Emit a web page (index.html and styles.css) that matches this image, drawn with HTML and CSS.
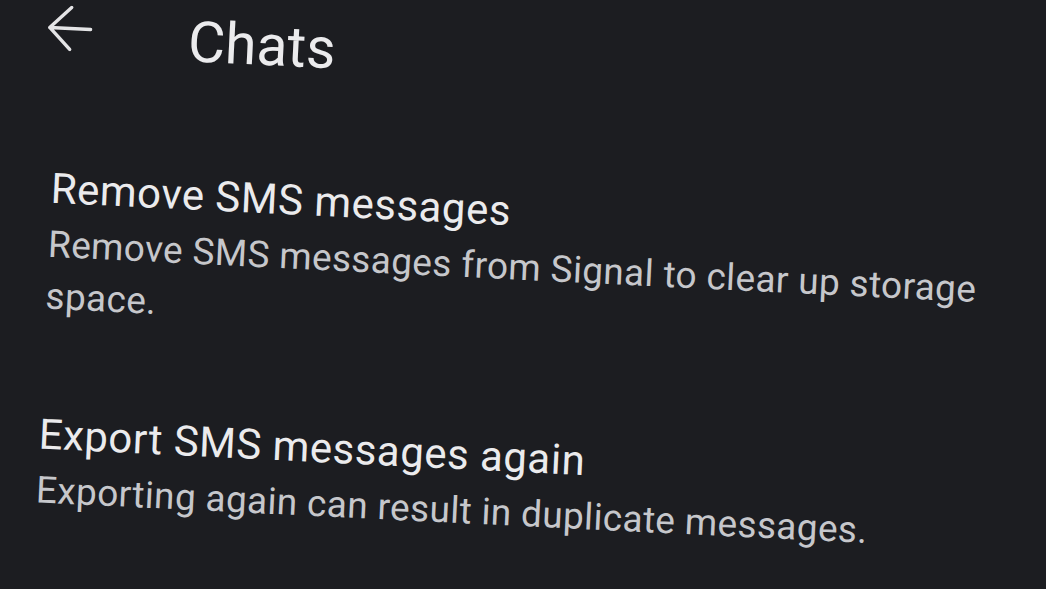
FILE: index.html
```html
<!DOCTYPE html>
<html lang="en">
<head>
<meta charset="utf-8">
<title>Chats</title>
<link rel="stylesheet" href="styles.css">
</head>
<body>
<div class="screen">
  <header class="appbar">
    <button class="back" aria-label="Back">
      <svg viewBox="0 0 46 46" width="46" height="46" aria-hidden="true">
        <path d="M44 23H3M24 2L3 23L24 44" fill="none" stroke="#e4e4e6" stroke-width="3.4" stroke-linecap="round" stroke-linejoin="round"/>
      </svg>
    </button>
    <h1 class="title">Chats</h1>
  </header>
  <ul class="prefs">
    <li class="pref">
      <div class="pref-title">Remove SMS messages</div>
      <div class="pref-summary">Remove SMS messages from Signal to clear up storage space.</div>
    </li>
    <li class="pref">
      <div class="pref-title">Export SMS messages again</div>
      <div class="pref-summary">Exporting again can result in duplicate messages.</div>
    </li>
  </ul>
</div>
</body>
</html>
```
FILE: styles.css
```css
html, body {
  margin: 0;
  padding: 0;
  background: #1c1d21;
  overflow: hidden;
}
body {
  width: 1046px;
  height: 589px;
  font-family: Roboto, "Noto Sans", sans-serif;
  color: #e8e8ea;
}
.screen {
  width: 1010px;
  transform: rotate(2.8deg);
  transform-origin: 0 0;
}
.appbar {
  display: flex;
  align-items: flex-start;
  height: 66px;
  margin-top: 0;
  padding-left: 48px;
  gap: 96px;
}
.back {
  background: none;
  border: 0;
  padding: 0;
  margin-top: 2px;
  width: 46px;
  height: 46px;
  display: flex;
}
.title {
  margin: 0;
  font-size: 57px;
  font-weight: 400;
  line-height: 66px;
  color: #ebebed;
}
.prefs {
  list-style: none;
  margin: 0;
  padding: 92px 0 0 60px;
  display: flex;
  flex-direction: column;
  gap: 84px;
}
.pref-title {
  font-size: 42px;
  line-height: 56px;
  letter-spacing: 0.5px;
  color: #ebebed;
}
.pref-summary {
  margin-top: 2px;
  font-size: 37px;
  line-height: 52px;
  letter-spacing: 0.35px;
  color: #c6c7cb;
  width: 945px;
}
```
